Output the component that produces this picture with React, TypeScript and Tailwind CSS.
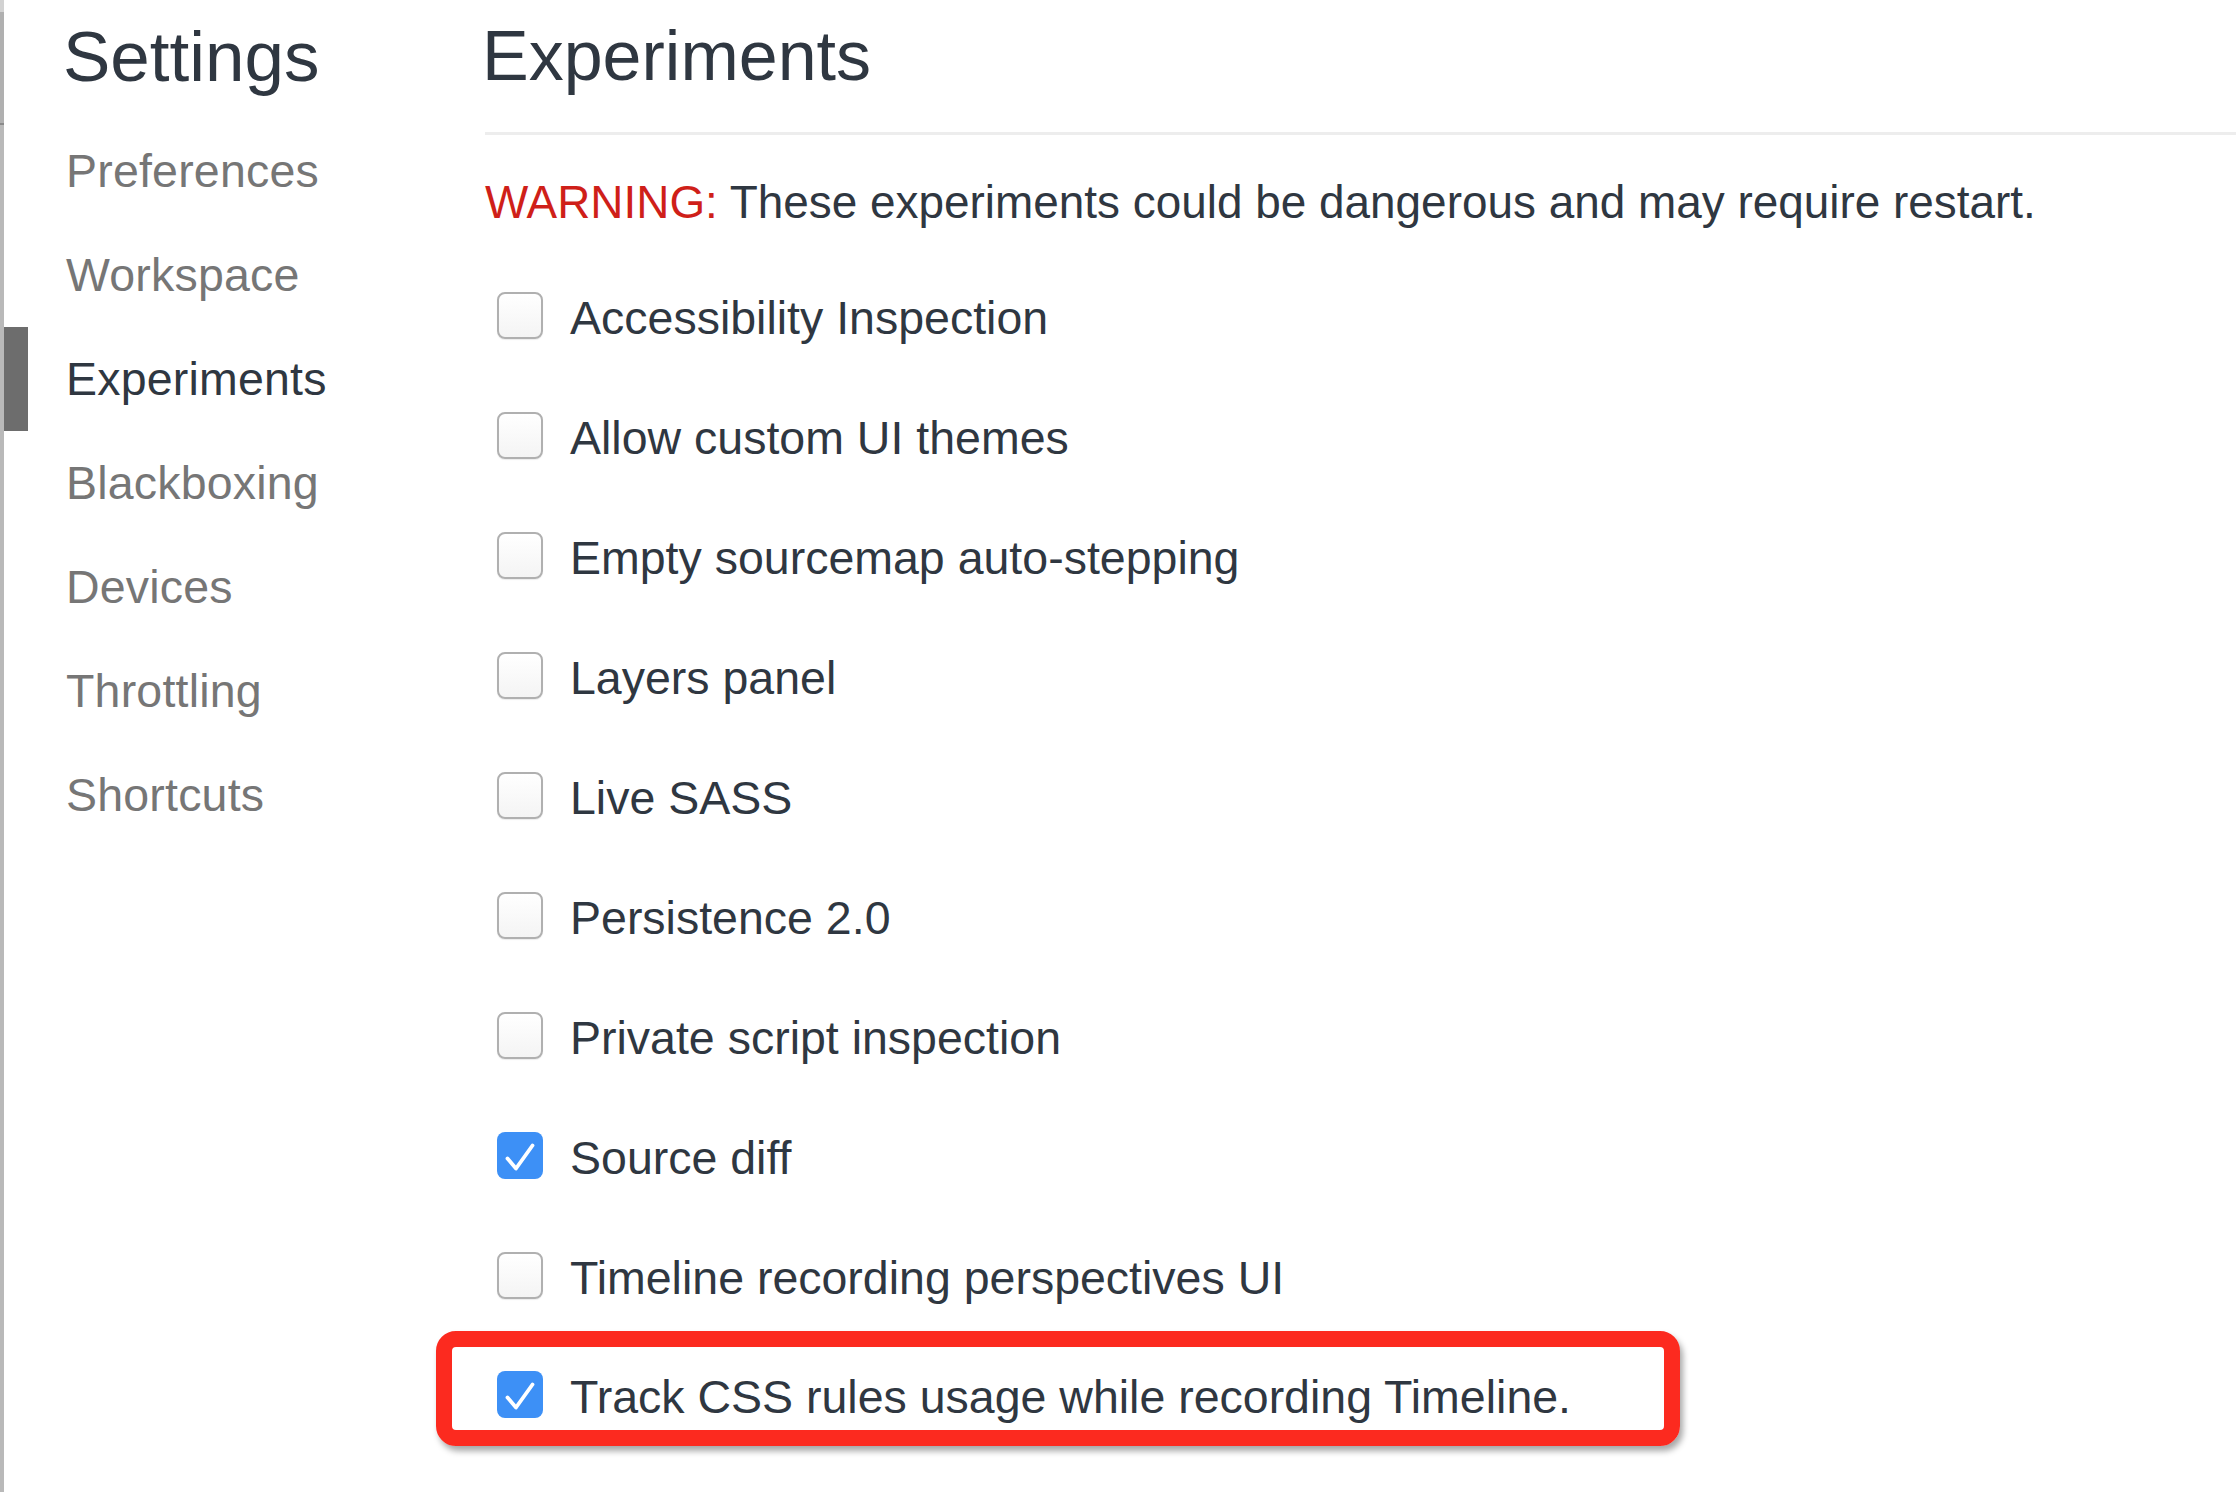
import React from "react";

const items = [
  "Preferences",
  "Workspace",
  "Experiments",
  "Blackboxing",
  "Devices",
  "Throttling",
  "Shortcuts",
];

const experiments: { label: string; checked: boolean }[] = [
  { label: "Accessibility Inspection", checked: false },
  { label: "Allow custom UI themes", checked: false },
  { label: "Empty sourcemap auto-stepping", checked: false },
  { label: "Layers panel", checked: false },
  { label: "Live SASS", checked: false },
  { label: "Persistence 2.0", checked: false },
  { label: "Private script inspection", checked: false },
  { label: "Source diff", checked: true },
  { label: "Timeline recording perspectives UI", checked: false },
  { label: "Track CSS rules usage while recording Timeline.", checked: true },
];

function Checkbox({ checked }: { checked: boolean }) {
  if (checked) {
    return (
      <div className="w-[46px] h-[47px] shrink-0 rounded-[8px] bg-[#3d90f6] flex items-center justify-center">
        <svg width="46" height="47" viewBox="0 0 46 47" fill="none">
          <path
            d="M10.5 26.5 L19 36.5 L35.5 13.5"
            stroke="#ffffff"
            strokeWidth="3.8"
            strokeLinecap="round"
            strokeLinejoin="round"
          />
        </svg>
      </div>
    );
  }
  return (
    <div className="w-[46px] h-[47px] shrink-0 rounded-[8px] border-[2px] border-[#b0b0b0] bg-gradient-to-b from-white to-[#f4f4f4] shadow-[0_1px_1px_rgba(0,0,0,0.08)]" />
  );
}

export default function App() {
  return (
    <div
      className="flex w-[2236px] min-h-[1492px] bg-white text-[#303942]"
      style={{ fontFamily: '"Liberation Sans", Arial, Helvetica, sans-serif' }}
    >
      {/* left window edge */}
      <div className="w-[4px] shrink-0 bg-[#b9b9b9] flex flex-col">
        <div className="h-[12px] bg-[#d2d2d2]" />
        <div className="h-[111px] bg-[#b0b0b0]" />
        <div className="h-[2px] bg-[#8a8a8a]" />
      </div>

      {/* sidebar */}
      <div className="w-[481px] shrink-0 flex flex-col">
        <div className="h-[119px] pt-[21px] pl-[59px]">
          <div className="text-[71px] leading-[71px] text-[#2f3741]">Settings</div>
        </div>
        {items.map((it) => {
          const active = it === "Experiments";
          return (
            <div key={it} className="flex h-[104px] items-center">
              <div className={`w-[24px] h-full ${active ? "bg-[#6d6d6d]" : ""}`} />
              <div
                className={`pl-[38px] text-[46.5px] tracking-[0.2px] leading-[104px] ${
                  active ? "text-[#2f3741]" : "text-[#767676]"
                }`}
              >
                {it}
              </div>
            </div>
          );
        })}
      </div>

      {/* main */}
      <div className="flex-1 flex flex-col">
        <div className="h-[132px] pt-[21px]">
          <div className="ml-[-3px] text-[70px] leading-[70px] text-[#2f3741]">Experiments</div>
        </div>
        <div className="h-[3px] bg-[#ededed]" />
        <div className="mt-[37px] h-[60px] text-[45.9px] leading-[60px] whitespace-nowrap">
          <span className="text-[#cf1f19]">WARNING:</span>{" "}
          <span className="text-[#2f3741]">
            These experiments could be dangerous and may require restart.
          </span>
        </div>
        <div className="mt-[24px] flex flex-col">
          {experiments.map((e, i) => (
            <div key={e.label} className="relative flex h-[119.9px] items-center pl-[12px]">
              <Checkbox checked={e.checked} />
              <div className="pl-[27px] pt-[5px] text-[46.5px] leading-[60px] text-[#2f3741] whitespace-nowrap">
                {e.label}
              </div>
              {i === experiments.length - 1 && (
                <div className="absolute left-[-49px] top-[-4px] w-[1244px] h-[115px] rounded-[20px] border-[16px] border-[#fc2a1f] shadow-[3px_5px_6px_rgba(0,0,0,0.35)]" />
              )}
            </div>
          ))}
        </div>
      </div>
    </div>
  );
}
